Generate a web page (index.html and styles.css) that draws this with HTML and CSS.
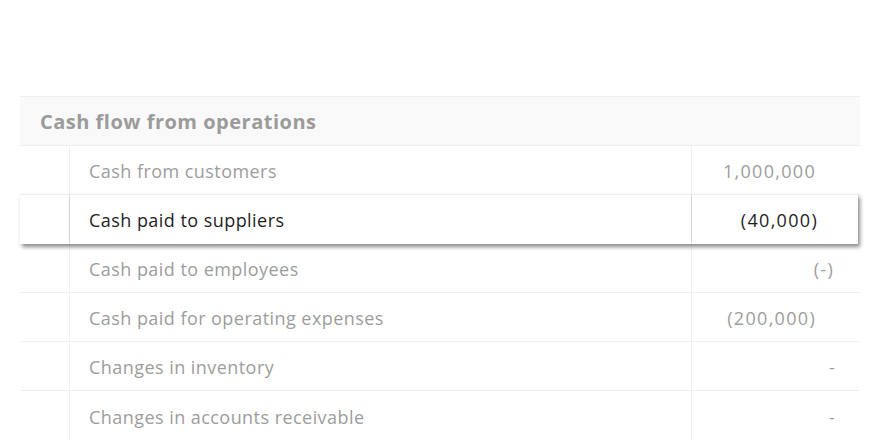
FILE: index.html
```html
<!DOCTYPE html>
<html>
<head>
<meta charset="utf-8">
<link rel="stylesheet" href="styles.css">
</head>
<body>
<div class="sheet">
  <div class="head">Cash flow from operations</div>
  <div class="row">
    <div class="cell gutter"></div>
    <div class="cell label">Cash from customers</div>
    <div class="cell value">1,000,000</div>
  </div>
  <div class="row active">
    <div class="cell gutter"></div>
    <div class="cell label">Cash paid to suppliers</div>
    <div class="cell value">(40,000)</div>
  </div>
  <div class="row">
    <div class="cell gutter"></div>
    <div class="cell label">Cash paid to employees</div>
    <div class="cell value paren">(-)</div>
  </div>
  <div class="row">
    <div class="cell gutter"></div>
    <div class="cell label">Cash paid for operating expenses</div>
    <div class="cell value">(200,000)</div>
  </div>
  <div class="row">
    <div class="cell gutter"></div>
    <div class="cell label">Changes in inventory</div>
    <div class="cell value dash">-</div>
  </div>
  <div class="row">
    <div class="cell gutter"></div>
    <div class="cell label">Changes in accounts receivable</div>
    <div class="cell value dash">-</div>
  </div>
</div>
</body>
</html>
```
FILE: styles.css
```css
html, body {
  margin: 0;
  background: #ffffff;
}
body {
  padding: 96px 20px 0;
  font-family: "Open Sans", "Noto Sans", sans-serif;
  overflow: hidden;
  height: 440px;
  box-sizing: border-box;
}
.sheet {
  width: 840px;
}
.head {
  height: 48px;
  border-top: 1px solid #efefef;
  border-bottom: 1px solid #efefef;
  background: #f9f9f9;
  display: flex;
  align-items: center;
  padding-left: 20px;
  padding-top: 1px;
  box-sizing: border-box;
  height: 50px;
  font-size: 20px;
  font-weight: 700;
  letter-spacing: 0.5px;
  color: #9b9b9b;
}
.row {
  display: grid;
  grid-template-columns: 50px 622px 1fr;
  height: 49.3px;
  box-sizing: border-box;
  border-bottom: 1px solid #efefef;
  background: #fff;
}
.cell {
  display: flex;
  align-items: center;
  padding-top: 2px;
  border-right: 1px solid #efefef;
  font-size: 18px;
  color: #9d9d9d;
}
.cell:last-child {
  border-right: none;
}
.label {
  padding-left: 19px;
  letter-spacing: 0.45px;
}
.value {
  justify-content: flex-end;
  padding-right: 44px;
  letter-spacing: 1.3px;
}
.value.paren {
  padding-right: 26px;
}
.value.dash {
  padding-right: 24px;
}
.row.active {
  position: relative;
  z-index: 1;
  margin-right: 2px;
  border-bottom-color: transparent;
  border-top: 1px solid #ececec;
  margin-top: -1px;
  box-shadow: 2px 3px 4px rgba(0, 0, 0, 0.45);
}
.row.active .cell {
  color: #1e1e1e;
  border-right-color: #d4d4d4;
}
.row.active .cell.gutter {
  border-right-color: #d4d4d4;
}
.row.active .value {
  padding-right: 40px;
}
```
